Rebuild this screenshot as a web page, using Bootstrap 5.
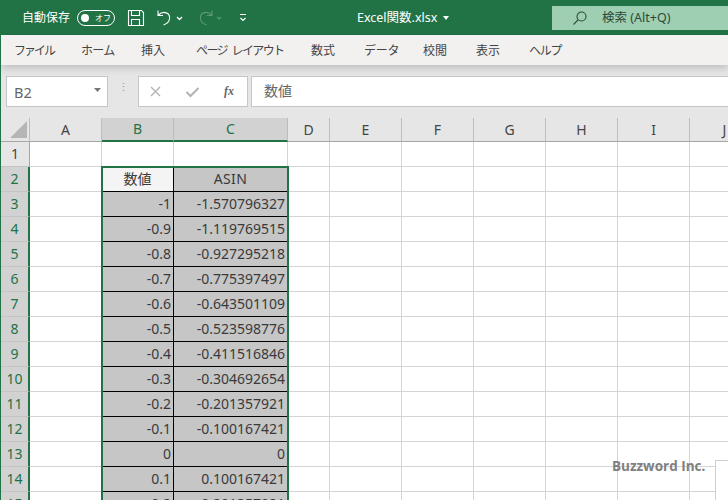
<!DOCTYPE html>
<html lang="ja">
<head>
<meta charset="utf-8">
<title>Excel関数.xlsx</title>
<link href="https://cdn.jsdelivr.net/npm/bootstrap@5.3.0/dist/css/bootstrap.min.css" rel="stylesheet">
<style>
html,body{margin:0;height:500px;overflow:hidden;background:#fff}
body{font-family:"Noto Sans","Noto Sans CJK JP",sans-serif;color:#333}
.xl-app{width:728px;height:500px;overflow:hidden;border-left:1px solid #217346}
.xl-title{height:35px;background:#217346;color:#fff;font-size:12px;flex:none;margin-left:-1px}
.xl-auto{margin-left:22px;width:48px}
.xl-toggle{width:38px;height:16px;border:1px solid #fff;border-radius:8px;margin-left:7px;padding:0 3px;font-size:8px}
.xl-knob{width:8px;height:8px;border-radius:50%;background:#fff}
.xl-icons{margin-left:12px}
.xl-file{position:absolute;left:357px;top:9px;font-size:12.500px;line-height:18px}
.xl-caret{margin-left:6px;vertical-align:2px}
.xl-search{position:absolute;left:552px;top:6px;width:176px;height:24px;background:#9fcfb3;color:#2c4a39;font-size:12.500px}
.xl-lens{margin-left:20px}
.xl-stext{margin-left:14px}
.xl-tabs{height:30px;background:#f3f1f0;flex:none;font-size:12px;color:#444;box-shadow:0 3px 8px rgba(0,0,0,.18);position:relative;z-index:2}
.xl-tab{position:absolute;top:6px;line-height:20px;white-space:nowrap}
.xl-k1{letter-spacing:-2px}
.xl-k2{letter-spacing:-.7px}
.xl-k3{letter-spacing:-1.600px;word-spacing:3px}
.xl-k4{letter-spacing:-.3px}
.xl-k5{letter-spacing:-1.200px}
.xl-fbar{height:53px;background:#e6e6e6;flex:none;padding:11px 0 0 5px;color:#666}
.xl-box{height:31px;background:#fff;border:1px solid #c6c6c6;font-size:14px}
.xl-name{width:102px;padding:3px 6px 0 7px;font-size:14.500px}
.xl-arrow{margin-top:-6px}
.xl-dots{width:30px;color:#999;font-size:11px;text-align:center}
.xl-btns{width:110px;position:relative;margin-right:3px}
.xl-form{flex:1;padding:0 12px 2px;font-size:14px;border-right:0}
.xl-wrap{position:relative;flex:1}
.xl-grid{table-layout:fixed;border-collapse:separate;border-spacing:0;width:759px;background:#fff;font-size:14px;color:#333}
.xl-grid th,.xl-grid td{height:25px;padding:0 2px;border-right:1px solid #d4d4d4;border-bottom:1px solid #d4d4d4;overflow:hidden;white-space:nowrap;font-weight:400;line-height:22px}
.xl-grid thead th{height:24px;background:#e6e6e6;border-right:1px solid #bdbdbd;border-bottom:1px solid #a6a6a6;text-align:center;font-size:14px;color:#444}
.xl-grid tbody th{background:#e6e6e6;border-right:1px solid #a6a6a6;border-bottom:1px solid #c4c4c4;text-align:center;color:#444}
.xl-grid thead th.xl-sh{background:#d2d2d2;color:#217346;border-bottom:2px solid #217346}
.xl-grid tbody th.xl-sh{background:#d2d2d2;color:#217346;border-right:2px solid #217346}
.xl-grid td.xl-v{background:#c6c6c6;border-right:1px solid #000;border-bottom:1px solid #000;text-align:right;color:#3a3a3a}
.xl-grid td.xl-h{text-align:center}
.xl-grid td.xl-asin{letter-spacing:.4px}
.xl-grid td.xl-a{background:#f4f4f4}
.xl-corner{position:absolute;left:9px;top:3px;width:0;height:0;border-style:solid;border-width:0 0 17px 17px;border-color:transparent transparent #b5b5b5 transparent}
.xl-sel{position:absolute;left:100px;top:48px;width:188px;height:340px;border:2px solid #217346;pointer-events:none}
.xl-mark{position:absolute;left:611px;top:457px;font-size:13.500px;font-weight:700;color:#7f7f7f;font-family:"Open Sans",sans-serif;line-height:18px;z-index:4}
.xl-note{position:absolute;left:714px;top:460px;width:30px;height:60px;background:#fff;border:1px solid #cfcfcf;z-index:3}
.xl-cross{left:10px;top:8px}
.xl-check{left:46px;top:8px}
.xl-fx{left:85px;top:2px;font:italic 700 12px "Liberation Serif",serif;line-height:24px;color:#666}
</style>
</head>
<body>
<div class="xl-app d-flex flex-column position-relative">
  <div class="xl-title d-flex align-items-center position-relative">
    <span class="xl-auto text-nowrap">自動保存</span>
    <span class="xl-toggle d-flex align-items-center justify-content-between"><i class="xl-knob"></i><span>オフ</span></span>
    <svg class="xl-icons" width="120" height="22" viewBox="0 0 120 22" fill="none" stroke="#fff" stroke-width="1.100">
      <path d="M1.500 3.500h13l2 2v13h-15zM4.500 3.500v5h8v-5M4.500 18.500v-6h8v6"/>
      <path d="M31 3.500v5h5M31.500 8c5-5 12-2 11 4-.5 3-3 5-6 6"/>
      <path d="M50 10l2.500 2.500 2.500-2.500" stroke-width="1.300"/>
      <path d="M85 3.500v5h-5M84.500 8c-5-5-12-2-11 4 .5 3 3 5 6 6M90 10l2 2 2-2" stroke="#5b9a78"/>
      <path d="M113 7.500h6M113.500 11l2.500 2.500 2.500-2.500" stroke-width="1.200"/>
    </svg>
    <span class="xl-file">Excel関数.xlsx<svg class="xl-caret" width="6" height="4"><path d="M0 0h6L3 4z" fill="#fff"/></svg></span>
    <div class="xl-search d-flex align-items-center">
      <svg class="xl-lens" width="16" height="16" viewBox="0 0 16 16" fill="none" stroke="#2c4a39" stroke-width="1.100"><circle cx="9.500" cy="6.500" r="4.500"/><path d="M6.300 9.700 1.500 14.500"/></svg>
      <span class="xl-stext">検索 (Alt+Q)</span>
    </div>
  </div>
  <div class="xl-tabs">
    <span class="xl-tab xl-k1" style="left:13px">ファイル</span>
    <span class="xl-tab xl-k2" style="left:80px">ホーム</span>
    <span class="xl-tab" style="left:140px">挿入</span>
    <span class="xl-tab xl-k3" style="left:195px">ページ レイアウト</span>
    <span class="xl-tab" style="left:310px">数式</span>
    <span class="xl-tab xl-k4" style="left:363px">データ</span>
    <span class="xl-tab" style="left:422px">校閲</span>
    <span class="xl-tab" style="left:475px">表示</span>
    <span class="xl-tab xl-k5" style="left:528px">ヘルプ</span>
  </div>
  <div class="xl-fbar d-flex align-items-start">
    <div class="xl-box xl-name d-flex align-items-center justify-content-between"><span>B2</span><svg class="xl-arrow" width="7" height="4"><path d="M0 0h7L3.500 4z" fill="#777"/></svg></div>
    <div class="xl-dots lh-lg">⋮</div>
    <div class="xl-box xl-btns d-flex align-items-center">
      <svg class="position-absolute xl-cross" width="14" height="14" fill="none" stroke="#b3b3b3" stroke-width="1.400"><path d="M2 2l9 9M11 2l-9 9"/></svg>
      <svg class="position-absolute xl-check" width="15" height="14" fill="none" stroke="#b3b3b3" stroke-width="2"><path d="M1.500 7l4 4 8-8"/></svg>
      <i class="position-absolute xl-fx">fx</i>
    </div>
    <div class="xl-box xl-form d-flex align-items-center">数値</div>
  </div>
  <div class="xl-wrap">
    <table class="xl-grid">
      <colgroup><col style="width:29px"><col style="width:72px"><col style="width:72px"><col style="width:114px"><col style="width:42px"><col style="width:72px"><col style="width:72px"><col style="width:72px"><col style="width:72px"><col style="width:72px"><col style="width:70px"></colgroup>
      <thead><tr><th></th><th>A</th><th class="xl-sh">B</th><th class="xl-sh">C</th><th>D</th><th>E</th><th>F</th><th>G</th><th>H</th><th>I</th><th>J</th></tr></thead>
      <tbody>
        <tr><th>1</th><td></td><td></td><td></td><td></td><td></td><td></td><td></td><td></td><td></td><td></td></tr>
        <tr><th class="xl-sh">2</th><td></td><td class="xl-v xl-h xl-a">数値</td><td class="xl-v xl-h xl-asin">ASIN</td><td></td><td></td><td></td><td></td><td></td><td></td><td></td></tr>
        <tr><th class="xl-sh">3</th><td></td><td class="xl-v">-1</td><td class="xl-v">-1.570796327</td><td></td><td></td><td></td><td></td><td></td><td></td><td></td></tr>
        <tr><th class="xl-sh">4</th><td></td><td class="xl-v">-0.9</td><td class="xl-v">-1.119769515</td><td></td><td></td><td></td><td></td><td></td><td></td><td></td></tr>
        <tr><th class="xl-sh">5</th><td></td><td class="xl-v">-0.8</td><td class="xl-v">-0.927295218</td><td></td><td></td><td></td><td></td><td></td><td></td><td></td></tr>
        <tr><th class="xl-sh">6</th><td></td><td class="xl-v">-0.7</td><td class="xl-v">-0.775397497</td><td></td><td></td><td></td><td></td><td></td><td></td><td></td></tr>
        <tr><th class="xl-sh">7</th><td></td><td class="xl-v">-0.6</td><td class="xl-v">-0.643501109</td><td></td><td></td><td></td><td></td><td></td><td></td><td></td></tr>
        <tr><th class="xl-sh">8</th><td></td><td class="xl-v">-0.5</td><td class="xl-v">-0.523598776</td><td></td><td></td><td></td><td></td><td></td><td></td><td></td></tr>
        <tr><th class="xl-sh">9</th><td></td><td class="xl-v">-0.4</td><td class="xl-v">-0.411516846</td><td></td><td></td><td></td><td></td><td></td><td></td><td></td></tr>
        <tr><th class="xl-sh">10</th><td></td><td class="xl-v">-0.3</td><td class="xl-v">-0.304692654</td><td></td><td></td><td></td><td></td><td></td><td></td><td></td></tr>
        <tr><th class="xl-sh">11</th><td></td><td class="xl-v">-0.2</td><td class="xl-v">-0.201357921</td><td></td><td></td><td></td><td></td><td></td><td></td><td></td></tr>
        <tr><th class="xl-sh">12</th><td></td><td class="xl-v">-0.1</td><td class="xl-v">-0.100167421</td><td></td><td></td><td></td><td></td><td></td><td></td><td></td></tr>
        <tr><th class="xl-sh">13</th><td></td><td class="xl-v">0</td><td class="xl-v">0</td><td></td><td></td><td></td><td></td><td></td><td></td><td></td></tr>
        <tr><th class="xl-sh">14</th><td></td><td class="xl-v">0.1</td><td class="xl-v">0.100167421</td><td></td><td></td><td></td><td></td><td></td><td></td><td></td></tr>
        <tr><th class="xl-sh">15</th><td></td><td class="xl-v">0.2</td><td class="xl-v">0.201357921</td><td></td><td></td><td></td><td></td><td></td><td></td><td></td></tr>
      </tbody>
    </table>
    <i class="xl-corner"></i>
    <div class="xl-sel"></div>
  </div>
  <div class="xl-note"></div>
  <div class="xl-mark">Buzzword Inc.</div>
</div>
<script src="https://cdn.jsdelivr.net/npm/bootstrap@5.3.0/dist/js/bootstrap.bundle.min.js"></script>
</body>
</html>
